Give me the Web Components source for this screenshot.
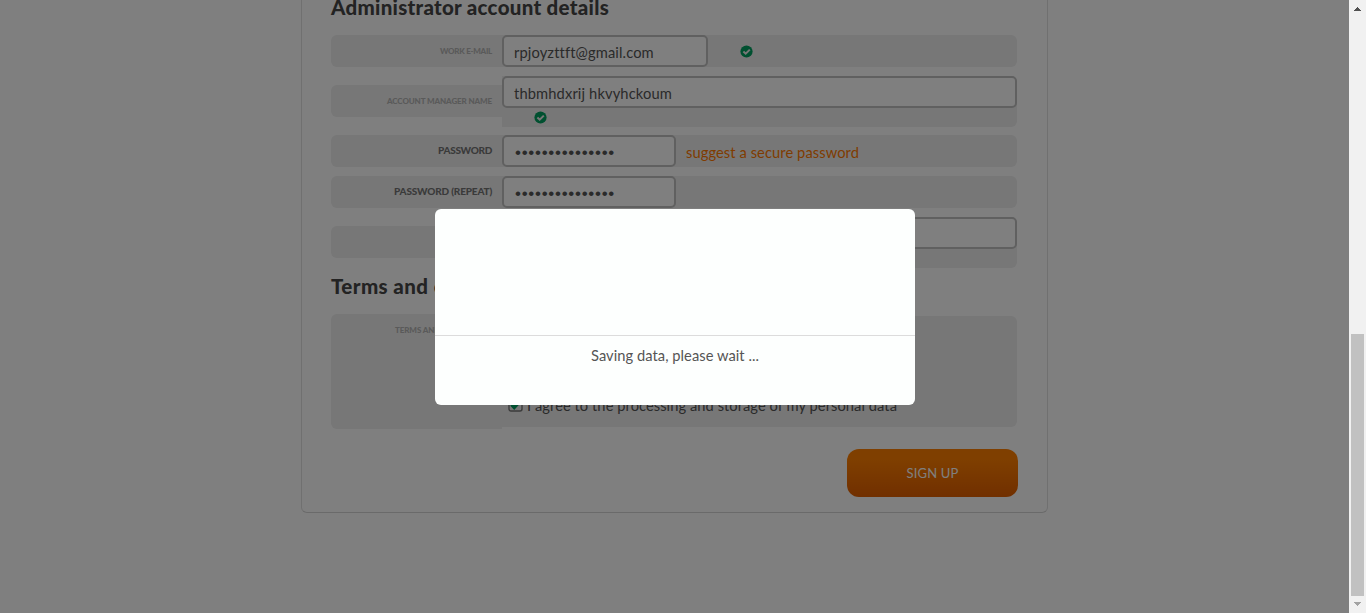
<!DOCTYPE html>
<html lang="en">
<head>
<meta charset="utf-8">
<title>Sign up</title>
<style>
html,body{margin:0;height:100%;overflow:hidden;background:#fff}
body{font-family:Lato,"Noto Sans",sans-serif;font-size:14.7px;color:#555}
</style>
</head>
<body>
<signup-page></signup-page>
<script>
const define = (name, html, ready) => {
  const t = document.createElement('template');
  t.innerHTML = html;
  customElements.define(name, class extends HTMLElement {
    constructor() {
      super();
      this.attachShadow({mode: 'open'}).append(t.content.cloneNode(true));
    }
    connectedCallback() { if (ready) ready(this, this.shadowRoot); }
  });
};

// A single line of text tracked so that it spans the given width.
define('fit-text', `<style>:host{display:inline-block;white-space:pre}span{display:inline-block}</style><span><slot></slot></span>`,
  (el, root) => {
    const s = root.querySelector('span');
    const w = +el.getAttribute('width');
    const n = el.textContent.length;
    s.style.letterSpacing = (w - s.getBoundingClientRect().width) / n + 'px';
  });

define('form-heading', `<style>
:host{display:block;height:28px;font:900 20.5px/28px Lato,sans-serif;color:#474747;white-space:nowrap}
</style><slot></slot>`);

define('form-row', `<style>
:host{display:grid;grid-template-columns:171px 515px;align-items:center}
.label{box-sizing:border-box;height:var(--label-height,32px);background:#eee;border-radius:6px 0 0 6px;padding:0 10px 0 0;text-align:right;
 font-size:var(--label-size,8px);font-weight:900;line-height:var(--label-line,33px);color:var(--label-color,#b4b4b4);margin-top:var(--label-shift,0)}
.body{box-sizing:border-box;height:var(--body-height,32px);background:#eee;border-radius:0 6px 6px 0;display:flex;flex-wrap:wrap;align-content:flex-start;align-items:flex-start}
</style><div class="label"><slot name="label"></slot></div><div class="body"><slot></slot></div>`);

define('text-field', `<style>
:host{display:block;box-sizing:border-box;width:var(--w,515px);height:32px;border:2px solid #c0c0c0;border-radius:5px;background:#fff;padding-left:10px;line-height:30px;color:#555;white-space:nowrap}
</style><slot></slot>`);

define('valid-mark', `<style>:host{display:block;width:13px;height:13px}svg{display:block}</style>
<svg width="13" height="13" viewBox="0 0 13 13"><circle cx="6.5" cy="6.5" r="6.1" fill="#00a060"/><path d="M3.4 6.5 5.7 8.7 9.8 4.6" fill="none" stroke="#eee" stroke-width="2"/></svg>`);

define('check-box', `<style>:host{display:block;width:15px;height:15px}svg{display:block}</style>
<svg width="15" height="15" viewBox="0 0 15 15"><rect x="1" y="1" width="13" height="13" rx="2" fill="none" stroke="#777" stroke-width="1.4"/><path d="M3.5 7.5 6.2 10.4 12 4" fill="none" stroke="#00a060" stroke-width="3.4"/></svg>`);

define('action-button', `<style>
:host{display:flex;width:171px;height:48px;border-radius:12px;background:linear-gradient(#ff7f00 20%,#e25f00);color:#fff;align-items:center;justify-content:center;font-size:13px;line-height:18px}
::slotted(*){margin-top:-1px}
</style><slot></slot>`);

define('scroll-bar', `<style>
:host{display:flex;flex-direction:column;align-items:center;width:17px;height:613px;background:#f1f1f1}
.thumb{width:13px;height:262px;background:#c1c1c1}
.track{height:317px}
svg{display:block;height:17px;width:17px}
</style>
<svg shape-rendering="crispEdges"><path d="M5 11h7v-1h-1v-1h-1v-1h-1v-1h-1v1h-1v1h-1v1h-1z" fill="#505050"/></svg><div class="track"></div><div class="thumb"></div>
<svg shape-rendering="crispEdges"><path d="M5 6h7v1h-1v1h-1v1h-1v1h-1v-1h-1v-1h-1v-1h-1z" fill="#a3a3a3"/></svg>`);

define('wait-dialog', `<style>
:host{display:grid;grid-template-rows:126px 1fr;width:480px;height:196px;border-radius:6px;background:#fdfffe;color:#555}
.message{border-top:1px solid #dcdcdc;text-align:center;line-height:38px}
</style><div></div><div class="message"><slot></slot></div>`);

define('signup-page', `<style>
:host{display:grid;grid-template-columns:1349px 17px;height:613px;overflow:hidden;position:relative}
main{height:613px;overflow:hidden;display:flex;flex-direction:column;align-items:flex-start}
.panel{box-sizing:border-box;width:747px;height:533px;flex:none;margin:-20px 0 0 301px;border:1px solid #e0e0e0;border-bottom-color:#d4d4d4;border-radius:6px;padding:12px 29px 0}
form-row{margin-bottom:9px}
.first{margin-bottom:14px}
.tall{--body-height:51px;--label-shift:-1px;margin-bottom:8px}
.dark{--label-size:10px;--label-color:#757575;--label-line:31px}
.mail{margin:10px 0 0 32px}
.name{margin:3px 0 0 32px}
.short{--w:174px}
.dots{font-family:"Liberation Sans",sans-serif;font-size:17px;margin:1px 0 0 1px;line-height:30px}
.suggest{color:#ff7900;line-height:34px;margin-left:10px}
.terms-head{margin:-4px 0 14px}
.terms{--label-height:115px;--body-height:111px;margin-bottom:20px}
.agree{display:flex;gap:4px;margin:81px 0 0 6px;line-height:17px}
action-button{margin-left:516px}
.overlay{position:absolute;inset:0 17px 0 0;background:rgba(0,0,0,.5);display:flex;justify-content:center;align-items:flex-start}
wait-dialog{margin-top:209px;margin-left:1px}
</style>
<main><div class="panel">
<form-heading class="first"><fit-text width="278">Administrator account details</fit-text></form-heading>
<form-row><fit-text slot="label" width="52">WORK E-MAIL</fit-text><text-field style="--w:206px"><fit-text width="139">rpjoyzttft@gmail.com</fit-text></text-field><valid-mark class="mail"></valid-mark></form-row>
<form-row class="tall"><fit-text slot="label" width="105">ACCOUNT MANAGER NAME</fit-text><text-field><fit-text width="158">thbmhdxrij hkvyhckoum</fit-text></text-field><valid-mark class="name"></valid-mark></form-row>
<form-row class="dark"><fit-text slot="label" width="54">PASSWORD</fit-text><text-field class="short"><fit-text class="dots" width="100">•••••••••••••••</fit-text></text-field><fit-text class="suggest" width="173">suggest a secure password</fit-text></form-row>
<form-row class="dark"><fit-text slot="label" width="98">PASSWORD (REPEAT)</fit-text><text-field class="short"><fit-text class="dots" width="100">•••••••••••••••</fit-text></text-field></form-row>
<form-row class="tall"><text-field></text-field></form-row>
<form-heading class="terms-head"><fit-text width="203">Terms and conditions</fit-text></form-heading>
<form-row class="terms"><fit-text slot="label" width="97">TERMS AND CONDITIONS</fit-text><div class="agree"><check-box></check-box><fit-text width="370">I agree to the processing and storage of my personal data</fit-text></div></form-row>
<action-button><fit-text width="52">SIGN UP</fit-text></action-button>
</div></main>
<scroll-bar></scroll-bar>
<div class="overlay"><wait-dialog><fit-text width="168">Saving data, please wait ...</fit-text></wait-dialog></div>`);
</script>
</body>
</html>
